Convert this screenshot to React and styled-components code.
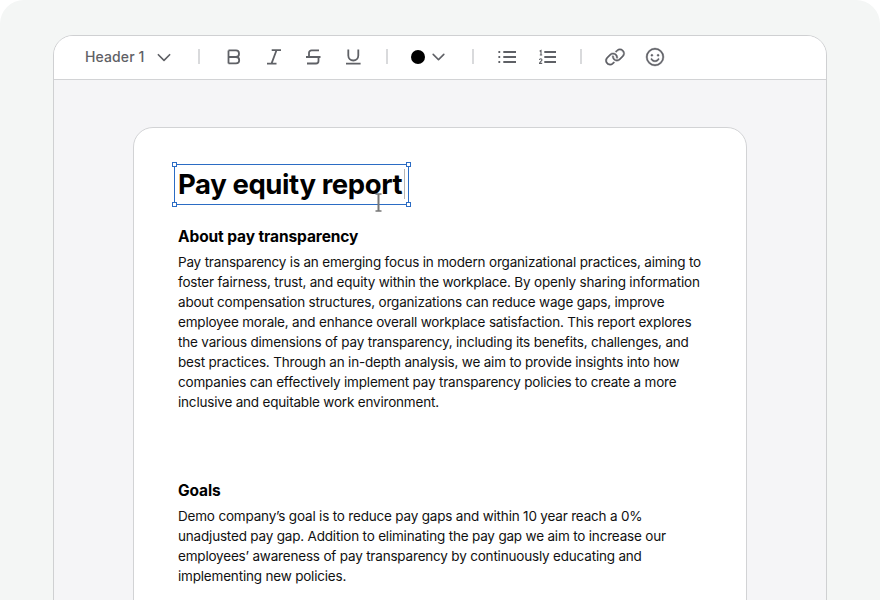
import styled, {createGlobalStyle} from 'styled-components';
import {PiCaretDownBold, PiLink, PiSmiley} from "react-icons/pi";

const GlobalStyle = createGlobalStyle`
  html, body {
    margin: 0;
    padding: 0;
    background: #ffffff;
  }
  * {
    box-sizing: border-box;
  }
`

const BoldIcon = () => (
    <ToolSvg viewBox="0 0 22 22">
        <path d="M6.5 4.4V17.4M6.5 4.4H14a3 3 0 0 1 3 3v.6a3 3 0 0 1-3 3H6.5M14 11a3.2 3.2 0 0 1 3.2 3.2v0a3.2 3.2 0 0 1-3.2 3.2H6.5"/>
    </ToolSvg>
)

const ItalicIcon = () => (
    <ToolSvg viewBox="0 0 22 22">
        <path d="M9.7 4.2H19M5 17.6H14.5M14.5 4.2L9.5 17.6"/>
    </ToolSvg>
)

const StrikeIcon = () => (
    <ToolSvg viewBox="0 0 22 22">
        <path d="M17 4.3H9.5A2.5 2.5 0 0 0 7 6.8V11M4 11H18.5M16.5 11V15A2.5 2.5 0 0 1 14 17.5H5"/>
    </ToolSvg>
)

const UnderlineIcon = () => (
    <ToolSvg viewBox="0 0 22 22">
        <path d="M6.3 3.5V9.5a5 5 0 0 0 10 0V3.5M4 17.6H18.6"/>
    </ToolSvg>
)

const BulletsIcon = () => (
    <ToolSvg viewBox="0 0 22 22">
        <path d="M7.3 6H20M7.3 11H20M7.3 16H20"/>
        <path d="M2.4 6H4.2M2.4 11H4.2M2.4 16H4.2"/>
    </ToolSvg>
)

const NumbersIcon = () => (
    <ToolSvg viewBox="0 0 22 22">
        <path d="M8.3 6H20M8.3 11H20M8.3 16H20"/>
        <NumeralPath d="M3.6 5.2L5 4.4V9M3.8 9H6.2M3.5 14a1.2 1.2 0 0 1 2.5 0c0 1-2.5 2-2.5 3.4H6.2"/>
    </ToolSvg>
)

const App = () => {
    return (
        <Stage>
            <GlobalStyle/>
            <Editor>
                <Toolbar>
                    <StyleSelect>
                        <StyleName>Header 1</StyleName>
                        <PiCaretDownBold size={18}/>
                    </StyleSelect>
                    <Divider/>
                    <ToolGroup>
                        <BoldIcon/>
                        <ItalicIcon/>
                        <StrikeIcon/>
                        <UnderlineIcon/>
                    </ToolGroup>
                    <Divider/>
                    <ColorSelect>
                        <ColorDot/>
                        <PiCaretDownBold size={17}/>
                    </ColorSelect>
                    <Divider/>
                    <ToolGroup>
                        <BulletsIcon/>
                        <NumbersIcon/>
                    </ToolGroup>
                    <Divider/>
                    <ToolGroup>
                        <Tool><PiLink size={22}/></Tool>
                        <Tool><PiSmiley size={22}/></Tool>
                    </ToolGroup>
                </Toolbar>
                <Workspace>
                    <Page>
                        <Title>
                            Pay equity report
                            <Selection>
                                <Handle $x="left" $y="top"/>
                                <Handle $x="right" $y="top"/>
                                <Handle $x="left" $y="bottom"/>
                                <Handle $x="right" $y="bottom"/>
                                <Caret/>
                            </Selection>
                            <TextCursor width="7" height="19" viewBox="0 0 7 19">
                                <path d="M0.5 1H6.5M0.5 18H6.5" stroke="#333" strokeWidth="1"/>
                                <path d="M3.5 1V18" stroke="#777" strokeWidth="2"/>
                            </TextCursor>
                        </Title>
                        <Heading>About pay transparency</Heading>
                        <Paragraph>
                            Pay transparency is an emerging focus in modern organizational practices, aiming to<br/>
                            foster fairness, trust, and equity within the workplace. By openly sharing information<br/>
                            about compensation structures, organizations can reduce wage gaps, improve<br/>
                            employee morale, and enhance overall workplace satisfaction. This report explores<br/>
                            the various dimensions of pay transparency, including its benefits, challenges, and<br/>
                            best practices. Through an in-depth analysis, we aim to provide insights into how<br/>
                            companies can effectively implement pay transparency policies to create a more<br/>
                            inclusive and equitable work environment.
                        </Paragraph>
                        <Heading $spaced>Goals</Heading>
                        <Paragraph>
                            Demo company’s goal is to reduce pay gaps and within 10 year reach a 0%<br/>
                            unadjusted pay gap. Addition to eliminating the pay gap we aim to increase our<br/>
                            employees’ awareness of pay transparency by continuously educating and<br/>
                            implementing new policies.
                        </Paragraph>
                    </Page>
                </Workspace>
            </Editor>
        </Stage>
    );
};

const Stage = styled.div`
  width: 880px;
  height: 600px;
  overflow: hidden;
  padding: 35px 53px 0;
  background: #f4f6f5;
  border-radius: 24px 24px 0 0;
  font-family: Inter, "Liberation Sans", sans-serif;
`

const Editor = styled.div`
  height: 600px;
  background: #f5f5f7;
  border: 1px solid #cfd0d2;
  border-radius: 20px 20px 0 0;
  overflow: hidden;
`

const Toolbar = styled.div`
  display: flex;
  align-items: center;
  height: 44px;
  padding: 0 0 2px 31px;
  background: #ffffff;
  border-bottom: 1px solid #d2d3d5;
  color: #5f6166;
`

const StyleSelect = styled.div`
  display: flex;
  align-items: center;
  gap: 10px;
  width: 91px;
`

const StyleName = styled.span`
  font-size: 14px;
  font-weight: 500;
  letter-spacing: 0.12px;
`

const Divider = styled.div`
  flex: none;
  width: 2px;
  height: 15px;
  margin: 0 22px;
  background: #d9dadc;
`

const ToolGroup = styled.div`
  display: flex;
  align-items: center;
  gap: 18px;
`

const Tool = styled.span`
  display: flex;
  width: 22px;
  height: 22px;

  svg {
    stroke-width: 5;
  }
`

const ToolSvg = styled.svg`
  flex: none;
  width: 22px;
  height: 22px;
  fill: none;
  stroke: currentColor;
  stroke-width: 1.8;
`

const NumeralPath = styled.path`
  stroke-width: 1.1;
`

const ColorSelect = styled.div`
  display: flex;
  align-items: center;
  gap: 5px;
  width: 40px;
  padding-left: 1px;
`

const ColorDot = styled.span`
  flex: none;
  width: 14px;
  height: 14px;
  border-radius: 50%;
  background: #000000;
`

const Workspace = styled.div`
  display: flex;
  justify-content: center;
  padding-top: 47px;
`

const Page = styled.div`
  width: 614px;
  height: 600px;
  padding: 37px 44px 0;
  background: #ffffff;
  border: 1px solid #d2d3d5;
  border-radius: 20px;
  color: #000000;
`

const Title = styled.h1`
  position: relative;
  margin: 0 0 24px;
  font-size: 27.5px;
  line-height: 38px;
  font-weight: 700;
  letter-spacing: -0.4px;
`

const Selection = styled.div`
  position: absolute;
  left: -4px;
  top: -1px;
  width: 235px;
  height: 41px;
  border: 1px solid #2b6cc4;
`

const Handle = styled.span`
  position: absolute;
  ${props => props.$x}: -3px;
  ${props => props.$y}: -3px;
  width: 5px;
  height: 5px;
  background: #ffffff;
  border: 1px solid #2b6cc4;
`

const Caret = styled.span`
  position: absolute;
  right: 3px;
  top: 4px;
  width: 1px;
  height: 30px;
  background: #b5b5b5;
`

const TextCursor = styled.svg`
  position: absolute;
  left: 197px;
  top: 28px;
`

const Heading = styled.h2`
  margin: ${props => props.$spaced ? "69px" : "0"} 0 5px;
  font-size: 15.5px;
  line-height: 20px;
  font-weight: 700;
  letter-spacing: -0.1px;
`

const Paragraph = styled.p`
  margin: 0;
  font-size: 13.5px;
  line-height: 20px;
  color: #111111;
  letter-spacing: -0.19px;
  white-space: nowrap;
`

export default App;
